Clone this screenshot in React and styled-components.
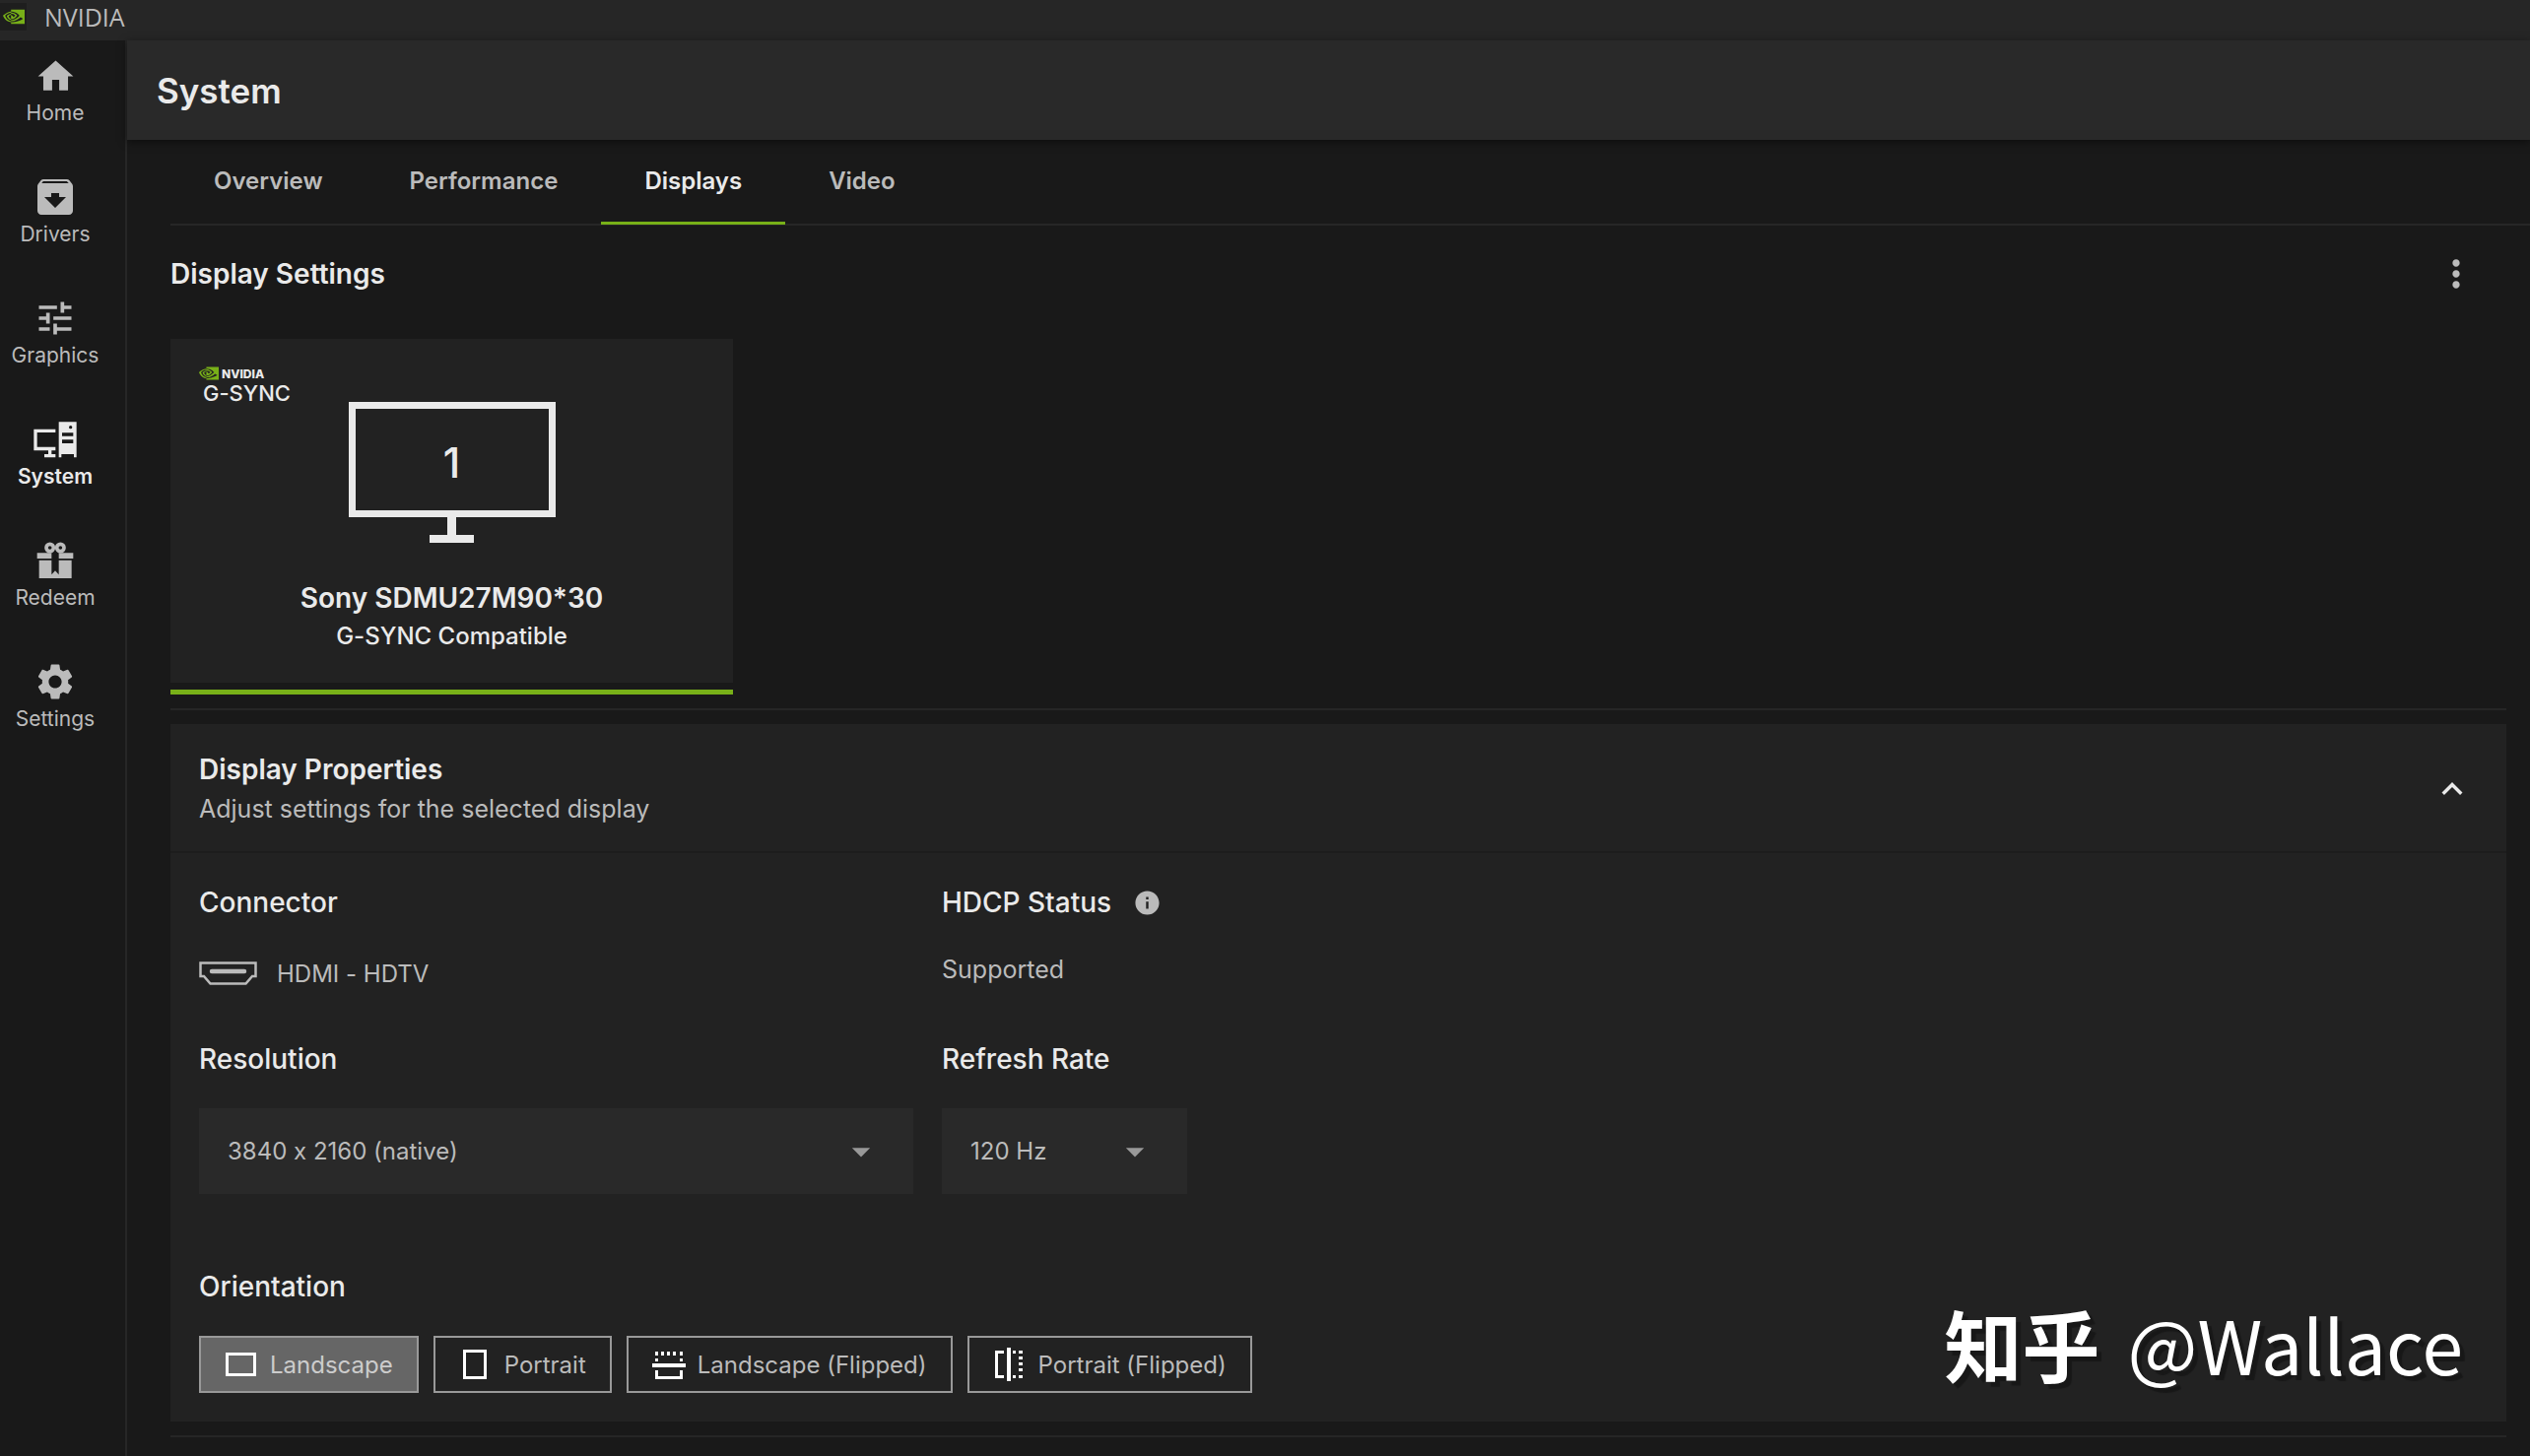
import React, { useState } from 'react';
import styled, { createGlobalStyle, css, ThemeProvider } from 'styled-components';
import {
    MdHome,
    MdArchive,
    MdTune,
    MdSettings,
    MdMoreVert,
    MdExpandLess,
    MdInfo,
    MdArrowDropDown,
} from 'react-icons/md';
import { SiNvidia } from 'react-icons/si';

const theme = {
    color: {
        page: '#191919',
        panel: '#222222',
        field: '#292929',
        bar: '#262626',
        line: '#262626',
        accent: '#78b018',
        text: '#eaeaea',
        muted: '#bbbbbb',
    },
};

const GlobalStyle = createGlobalStyle`
    * {
        box-sizing: border-box;
    }

    body {
        margin: 0;
        background-color: ${({theme}) => theme.color.page};
        color: ${({theme}) => theme.color.text};
        font-family: Inter, "Liberation Sans", sans-serif;
        font-size: 24px;
        font-variant-ligatures: no-contextual;
    }

    button, select {
        font: inherit;
        font-variant-ligatures: no-contextual;
        color: inherit;
        border: 0;
        background: none;
        cursor: pointer;
    }

    h1, h2, h3, p {
        margin: 0;
    }
`;

const Window = styled.div`
    display: flex;
    flex-direction: column;
    min-height: 100vh;
`;

const TitleBar = styled.div`
    display: flex;
    align-items: center;
    gap: 18px;
    height: 41px;
    padding-bottom: 8px;
    background-color: ${({theme}) => theme.color.bar};
    color: ${({theme}) => theme.color.muted};
    font-family: "Open Sans", "Noto Sans", sans-serif;
    font-size: 25px;
`;

const AppIcon = styled.span`
    display: flex;
    align-items: center;
    justify-content: center;
    width: 27px;
    height: 28px;
    background-color: #1e1e1e;
    color: ${({theme}) => theme.color.accent};
`;

const Body = styled.div`
    display: flex;
    flex: 1;
`;

const Sidebar = styled.nav`
    flex: none;
    width: 129px;
    padding: 14px 15px 0 0;
    border-right: 2px solid ${({theme}) => theme.color.line};
`;

const NavItem = styled.a`
    display: flex;
    flex-direction: column;
    align-items: center;
    height: 123px;
    color: ${({$active, theme}) => $active ? theme.color.text : theme.color.muted};
    font-size: 21px;
    font-weight: ${({$active}) => $active ? 600 : 400};
    line-height: 30px;
    text-decoration: none;
`;

const NavIcon = styled.span`
    display: flex;
    align-items: center;
    justify-content: center;
    height: 44px;
    margin-bottom: 1px;
`;

const Main = styled.main`
    flex: 1;
    min-width: 0;
`;

const PageHeader = styled.header`
    display: flex;
    align-items: center;
    height: 101px;
    padding-left: 30px;
    background-color: ${({theme}) => theme.color.field};
    box-shadow: 0 2px 8px rgba(0, 0, 0, 0.5);
`;

const PageTitle = styled.h1`
    font-size: 35px;
    font-weight: 600;
`;

const Content = styled.div`
    padding-left: 44px;
`;

const TabList = styled.div`
    display: flex;
    height: 87px;
    border-bottom: 2px solid ${({theme}) => theme.color.line};
`;

const Tab = styled.button`
    margin-bottom: -1px;
    padding: 0 44px;
    border-bottom: 3px solid ${({$active, theme}) => $active ? theme.color.accent : 'transparent'};
    color: ${({$active, theme}) => $active ? theme.color.text : theme.color.muted};
    font-weight: 600;
`;

const Section = styled.section`
    margin-right: 24px;
`;

const SectionHeader = styled.div`
    display: flex;
    align-items: center;
    justify-content: space-between;
    height: 98px;
    margin-bottom: 17px;
    padding-right: 29px;
`;

const SectionTitle = styled.h2`
    font-size: 28px;
    font-weight: 600;
    line-height: 40px;
`;

const IconButton = styled.button`
    display: flex;
    padding: 0;
    color: ${({$bright, theme}) => $bright ? theme.color.text : theme.color.muted};
`;

const Divider = styled.hr`
    height: 2px;
    margin: 14px 0;
    border: 0;
    background-color: ${({theme}) => theme.color.line};
`;

const DisplayTile = styled.button`
    display: block;
    width: 571px;
    padding: 0 0 7px;
    border-bottom: 5px solid ${({theme}) => theme.color.accent};
`;

const TileBody = styled.span`
    display: flex;
    flex-direction: column;
    align-items: center;
    padding: 28px 29px;
    background-color: ${({theme}) => theme.color.panel};
`;

const GsyncBadge = styled.span`
    display: flex;
    flex-direction: column;
    align-self: flex-start;
    align-items: flex-start;
    gap: 4px;
`;

const BadgeBrand = styled.span`
    display: flex;
    align-items: center;
    gap: 3px;
    height: 14px;
    font-size: 12px;
    font-weight: 800;

    svg {
        color: ${({theme}) => theme.color.accent};
    }
`;

const BadgeName = styled.span`
    padding-left: 4px;
    font-size: 22px;
    font-weight: 500;
    line-height: 18px;
`;

const MonitorScreen = styled.span`
    display: flex;
    align-items: center;
    justify-content: center;
    width: 210px;
    height: 117px;
    padding-top: 5px;
    border: 7px solid ${({theme}) => theme.color.text};
    font-size: 42px;
    font-weight: 500;
`;

const MonitorNeck = styled.span`
    width: 9px;
    height: 18px;
    background-color: ${({theme}) => theme.color.text};
`;

const MonitorBase = styled.span`
    width: 45px;
    height: 8px;
    margin-bottom: 36px;
    background-color: ${({theme}) => theme.color.text};
`;

const DisplayName = styled.span`
    font-size: 28px;
    font-weight: 600;
    line-height: 40px;
`;

const DisplayMode = styled.span`
    font-weight: 500;
    line-height: 38px;
`;

const Panel = styled.div`
    background-color: ${({theme}) => theme.color.panel};
`;

const PanelHeader = styled.div`
    display: flex;
    align-items: center;
    justify-content: space-between;
    padding: 26px 34px 23px 29px;
    border-bottom: 2px solid #1d1d1d;
`;

const PanelHint = styled.p`
    color: ${({theme}) => theme.color.muted};
    font-size: 25px;
    line-height: 40px;
`;

const PanelBody = styled.div`
    padding: 30px 29px 29px;
`;

const SettingsGrid = styled.div`
    display: grid;
    grid-template-columns: minmax(0, 725px) 1fr;
    gap: 45px 29px;
    margin-bottom: 74px;
`;

const Setting = styled.div``;

const labelText = css`
    color: ${({theme}) => theme.color.text};
    font-size: 28px;
    font-weight: 500;
    line-height: 40px;
`;

const SettingTitle = styled.h3`
    display: flex;
    align-items: center;
    gap: 22px;
    margin-bottom: 30px;
    ${labelText}
`;

const SettingLabel = styled.label`
    display: block;
    margin-bottom: 30px;
    ${labelText}
`;

const SettingValue = styled.p`
    color: ${({theme}) => theme.color.muted};
    font-size: 25px;
    line-height: 36px;
`;

const ConnectorValue = styled.div`
    display: flex;
    align-items: center;
    gap: 20px;
    height: 44px;
    color: ${({theme}) => theme.color.muted};
`;

const SelectBox = styled.div`
    position: relative;
    width: ${({$width}) => $width || '100%'};
    background-color: ${({theme}) => theme.color.field};
    color: ${({theme}) => theme.color.muted};

    svg {
        position: absolute;
        top: 22px;
        right: 31px;
        color: #999999;
        pointer-events: none;
    }
`;

const Select = styled.select`
    display: block;
    width: 100%;
    height: 87px;
    padding: 0 80px 0 29px;
    appearance: none;

    option {
        background-color: ${({theme}) => theme.color.field};
    }
`;

const ButtonRow = styled.div`
    display: flex;
    flex-wrap: wrap;
    gap: 15px;
`;

const OrientationButton = styled.button`
    display: flex;
    align-items: center;
    gap: 8px;
    height: 58px;
    padding: 0 24px 0 20px;
    border: 2px solid #999999;
    background-color: ${({$active}) => $active ? '#666666' : 'transparent'};
    color: ${({$active, theme}) => $active ? '#cccccc' : theme.color.muted};

    svg {
        color: #ffffff;
    }
`;

const Watermark = styled.div`
    position: absolute;
    right: 68px;
    top: 1309px;
    display: flex;
    align-items: center;
    gap: 28px;
    color: #ffffff;
    font-family: "Noto Sans CJK SC", sans-serif;
    font-size: 75px;
    line-height: 110px;
    text-shadow: 5px 5px 1px rgba(0, 0, 0, 0.3);
    pointer-events: none;

    b {
        font-size: 79px;
    }
`;

const SystemIcon = () => (
    <svg width="44" height="37" viewBox="103 79 132 111" fill="currentColor">
        <path d="M104 102h66v10h-56v44h56v11h-12v11h12v10h-34v-10h12v-11h-44z"/>
        <path fillRule="evenodd" d="M180 80h54v108h-8v-10h-38v10h-8zM190 113v10h34v-10zM190 134v11h34v-11zM211 96a5 5 0 1 0 10 0a5 5 0 1 0-10 0z"/>
    </svg>
);

const GiftIcon = () => (
    <svg width="38" height="38" viewBox="112 446 114 114" fill="currentColor">
        <circle cx="153" cy="464" r="11" fill="none" stroke="currentColor" strokeWidth="11"/>
        <circle cx="185" cy="464" r="11" fill="none" stroke="currentColor" strokeWidth="11"/>
        <path d="M114 480h44v17h-44zM180 480h44v17h-44z"/>
        <path d="M120 502h38v44l11-12l11 12v-44h39v55h-99z"/>
    </svg>
);

const HdmiIcon = () => (
    <svg width="59" height="24" viewBox="0 0 59 24" fill="none" stroke="currentColor">
        <path d="M1.500 1.500h56v13.500h-3.500l-6.500 7.500h-36l-6.500-7.500h-3.500z" strokeWidth="2.500"/>
        <path d="M13 10h33" strokeWidth="4.500" strokeLinecap="round"/>
    </svg>
);

const LandscapeIcon = () => (
    <svg width="42" height="42" viewBox="0 0 42 42" fill="none" stroke="currentColor" strokeWidth="3">
        <rect x="6.500" y="10.500" width="28" height="21"/>
    </svg>
);

const PortraitIcon = () => (
    <svg width="42" height="42" viewBox="0 0 42 42" fill="none" stroke="currentColor" strokeWidth="3">
        <rect x="9.500" y="7.500" width="21" height="27"/>
    </svg>
);

// mirror line in the middle, solid half on one side and dotted half on the other
const FlipIcon = ({turn = 0}) => (
    <svg width="42" height="42" viewBox="0 0 42 42" fill="currentColor">
        <g transform={`rotate(${turn} 21 21)`}>
            <path d="M6 7h9v3h-6v22h6v3h-9zM18 4h4v34h-4z"/>
            <path d="M24 7h3v3h-3zM30 7h4v3h-4zM30 13h4v3h-4zM30 19h4v3h-4zM30 25h4v3h-4zM30 32h4v3h-4zM24 32h3v3h-3z"/>
        </g>
    </svg>
);

const navItems = [
    {name: 'Home', icon: <MdHome size={43}/>},
    {name: 'Drivers', icon: <MdArchive size={48}/>},
    {name: 'Graphics', icon: <MdTune size={44}/>},
    {name: 'System', icon: <SystemIcon/>},
    {name: 'Redeem', icon: <GiftIcon/>},
    {name: 'Settings', icon: <MdSettings size={44}/>},
];

const tabs = ['Overview', 'Performance', 'Displays', 'Video'];

const orientations = [
    {name: 'Landscape', icon: <LandscapeIcon/>},
    {name: 'Portrait', icon: <PortraitIcon/>},
    {name: 'Landscape (Flipped)', icon: <FlipIcon turn={-90}/>},
    {name: 'Portrait (Flipped)', icon: <FlipIcon/>},
];

const DisplayProperties = () => {
    const [open, setOpen] = useState(true);
    const [orientation, setOrientation] = useState('Landscape');

    return (
        <Panel>
            <PanelHeader>
                <div>
                    <SectionTitle>Display Properties</SectionTitle>
                    <PanelHint>Adjust settings for the selected display</PanelHint>
                </div>
                <IconButton $bright aria-label="Toggle display properties" aria-expanded={open} onClick={() => setOpen(!open)}>
                    <MdExpandLess size={42}/>
                </IconButton>
            </PanelHeader>
            {open && (
                <PanelBody>
                    <SettingsGrid>
                        <Setting>
                            <SettingTitle>Connector</SettingTitle>
                            <ConnectorValue><HdmiIcon/>HDMI - HDTV</ConnectorValue>
                        </Setting>
                        <Setting>
                            <SettingTitle>
                                HDCP Status
                                <IconButton aria-label="About HDCP"><MdInfo size={29}/></IconButton>
                            </SettingTitle>
                            <SettingValue>Supported</SettingValue>
                        </Setting>
                        <Setting>
                            <SettingLabel htmlFor="resolution">Resolution</SettingLabel>
                            <SelectBox>
                                <Select id="resolution">
                                    <option>3840 x 2160 (native)</option>
                                </Select>
                                <MdArrowDropDown size={44}/>
                            </SelectBox>
                        </Setting>
                        <Setting>
                            <SettingLabel htmlFor="refresh">Refresh Rate</SettingLabel>
                            <SelectBox $width="249px">
                                <Select id="refresh">
                                    <option>120 Hz</option>
                                </Select>
                                <MdArrowDropDown size={44}/>
                            </SelectBox>
                        </Setting>
                    </SettingsGrid>
                    <SettingTitle>Orientation</SettingTitle>
                    <ButtonRow>
                        {orientations.map(({name, icon}) => (
                            <OrientationButton
                                key={name}
                                $active={name === orientation}
                                aria-pressed={name === orientation}
                                onClick={() => setOrientation(name)}
                            >
                                {icon}
                                {name}
                            </OrientationButton>
                        ))}
                    </ButtonRow>
                </PanelBody>
            )}
        </Panel>
    );
};

const App = () => {
    const [tab, setTab] = useState('Displays');

    return (
        <ThemeProvider theme={theme}>
            <GlobalStyle/>
            <Window>
                <TitleBar>
                    <AppIcon><SiNvidia size={22}/></AppIcon>
                    NVIDIA
                </TitleBar>
                <Body>
                    <Sidebar>
                        {navItems.map(({name, icon}) => (
                            <NavItem key={name} href={`#${name.toLowerCase()}`} $active={name === 'System'}>
                                <NavIcon>{icon}</NavIcon>
                                {name}
                            </NavItem>
                        ))}
                    </Sidebar>
                    <Main>
                        <PageHeader>
                            <PageTitle>System</PageTitle>
                        </PageHeader>
                        <Content>
                            <TabList role="tablist">
                                {tabs.map((name) => (
                                    <Tab
                                        key={name}
                                        role="tab"
                                        aria-selected={name === tab}
                                        $active={name === tab}
                                        onClick={() => setTab(name)}
                                    >
                                        {name}
                                    </Tab>
                                ))}
                            </TabList>
                            <Section>
                                <SectionHeader>
                                    <SectionTitle>Display Settings</SectionTitle>
                                    <IconButton aria-label="More options"><MdMoreVert size={44}/></IconButton>
                                </SectionHeader>
                                <DisplayTile>
                                    <TileBody>
                                        <GsyncBadge>
                                            <BadgeBrand><SiNvidia size={20}/>NVIDIA</BadgeBrand>
                                            <BadgeName>G-SYNC</BadgeName>
                                        </GsyncBadge>
                                        <MonitorScreen>1</MonitorScreen>
                                        <MonitorNeck/>
                                        <MonitorBase/>
                                        <DisplayName>Sony SDMU27M90*30</DisplayName>
                                        <DisplayMode>G-SYNC Compatible</DisplayMode>
                                    </TileBody>
                                </DisplayTile>
                                <Divider/>
                                <DisplayProperties/>
                                <Divider/>
                            </Section>
                        </Content>
                    </Main>
                </Body>
            </Window>
            <Watermark><b>知乎</b>@Wallace</Watermark>
        </ThemeProvider>
    );
};

export default App;
